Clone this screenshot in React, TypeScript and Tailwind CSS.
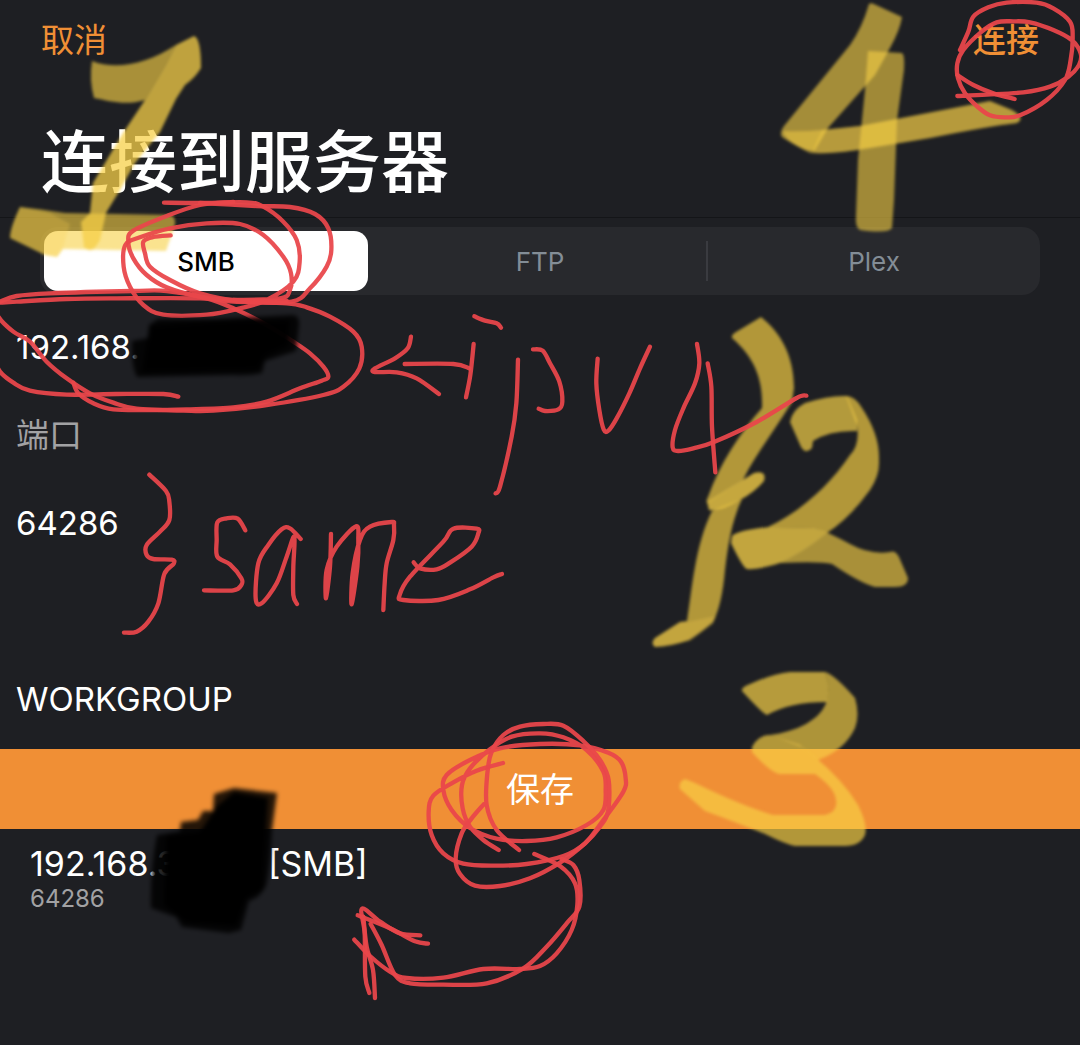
import React, { useState } from "react";

type Point = [number, number];

/* Smooth curve through a list of points (Catmull-Rom to Bezier). */
function smooth(points: Point[]): string {
  let d = `M${points[0][0]} ${points[0][1]}`;
  for (let i = 0; i < points.length - 1; i++) {
    const p0 = points[Math.max(0, i - 1)];
    const p1 = points[i];
    const p2 = points[i + 1];
    const p3 = points[Math.min(points.length - 1, i + 2)];
    d += `C${p1[0] + (p2[0] - p0[0]) / 6} ${p1[1] + (p2[1] - p0[1]) / 6} ${p2[0] - (p3[0] - p1[0]) / 6} ${p2[1] - (p3[1] - p1[1]) / 6} ${p2[0]} ${p2[1]}`;
  }
  return d;
}

/* Pen strokes, grouped by the area they annotate; three drawing units per pixel. */
const penGroups: { x: number; y: number; strokes: Point[][] }[] = [
  {
    x: 760,
    y: 0,
    strokes: [
      [[592, 288], [680, 284], [790, 277], [870, 260], [925, 230], [957, 195], [962, 160], [935, 120], [880, 90], [810, 67], [760, 64], [710, 67], [665, 95], [610, 150], [592, 190], [594, 235], [615, 280], [650, 318], [690, 346], [735, 352], [780, 346], [860, 300], [915, 240], [932, 180], [938, 110], [930, 65], [880, 25], [830, 8], [740, 8], [685, 22], [640, 50], [625, 95], [600, 150]],
      [[592, 225], [640, 255], [700, 280], [764, 297]],
    ],
  },
  {
    x: 0,
    y: 190,
    strokes: [
      [[492, 38], [600, 39], [740, 37], [790, 50], [850, 95], [890, 150], [899, 215], [880, 275], [800, 330], [720, 355], [620, 374], [490, 374], [430, 345], [390, 290], [371, 230], [376, 165], [420, 142], [510, 115], [620, 100], [720, 102], [790, 135], [850, 200], [873, 250], [870, 300], [840, 325], [700, 330]],
      [[600, 39], [770, 48], [870, 51], [945, 72], [985, 115], [994, 180], [980, 230], [930, 295], [875, 335], [720, 333], [600, 310], [510, 270], [450, 230], [435, 190], [430, 155], [460, 141], [512, 136]],
      [[700, 36], [600, 45], [500, 78], [400, 122], [385, 155], [400, 205], [440, 255], [500, 292], [600, 320], [700, 330], [860, 332]],
      [[535, 620], [490, 612], [350, 612], [200, 614], [90, 602], [40, 578], [0, 545], [-20, 500]],
      [[-10, 345], [-5, 380], [40, 425], [90, 455], [140, 515], [200, 565], [270, 610], [340, 638], [410, 656], [550, 662], [640, 662], [800, 645], [970, 615], [1030, 590], [1078, 535], [1085, 470], [1060, 425], [990, 380], [920, 352], [860, 340], [700, 335], [600, 325], [350, 325], [200, 327], [50, 335], [0, 338]],
      [[0, 335], [50, 318], [150, 310], [400, 303], [500, 303], [620, 325], [700, 355], [800, 405], [880, 455], [930, 490], [970, 530], [985, 560], [965, 572], [900, 595], [800, 635], [700, 652], [560, 658], [450, 660], [340, 658], [280, 640], [235, 610], [220, 578]],
    ],
  },
  {
    x: 350,
    y: 300,
    strokes: [
      [[183, 110], [173, 145], [135, 175], [75, 205], [75, 216], [140, 217], [200, 235], [267, 282]],
      [[164, 192], [310, 192], [358, 205]],
      [[371, 132], [361, 225], [348, 292]],
      [[373, 49], [405, 62], [440, 70], [453, 83]],
      [[504, 179], [499, 310], [485, 410], [450, 560], [437, 580]],
      [[549, 148], [578, 152], [600, 190], [628, 245], [637, 305], [625, 328], [585, 333], [566, 326]],
      [[743, 176], [739, 250], [748, 330], [761, 388], [775, 392], [800, 355], [838, 280], [870, 205], [900, 140]],
    ],
  },
  {
    x: 640,
    y: 300,
    strokes: [
      [[171, 132], [178, 190], [165, 250], [130, 325], [105, 390], [98, 442], [115, 453], [160, 445], [220, 427], [350, 366], [470, 294], [499, 287]],
      [[203, 190], [214, 260], [216, 380], [226, 517]],
    ],
  },
  {
    x: 110,
    y: 460,
    strokes: [
      [[118, 44], [168, 93], [178, 125], [178, 180], [150, 215], [110, 255], [110, 285], [130, 297], [185, 299], [191, 311], [163, 342], [145, 430], [115, 485], [80, 515], [42, 518]],
      [[406, 211], [383, 176], [350, 175], [322, 187], [320, 240], [322, 290], [360, 313], [394, 355], [394, 375], [370, 391], [282, 391]],
      [[572, 237], [540, 205], [515, 208], [475, 255], [445, 310], [437, 415], [455, 430], [500, 370], [530, 290], [553, 230], [550, 320], [550, 405], [561, 432]],
      [[663, 222], [660, 320], [648, 415], [650, 330], [680, 260], [738, 199], [745, 240], [742, 320], [725, 433], [728, 340], [750, 240], [780, 200], [845, 186], [852, 195], [850, 240], [830, 310], [824, 370], [820, 450]],
      [[911, 307], [930, 325], [980, 328], [1020, 308], [1085, 260], [1105, 220], [1100, 206], [1030, 206], [1000, 245], [900, 350], [869, 405], [880, 420], [985, 420], [1080, 388], [1150, 352], [1176, 342]],
    ],
  },
  {
    x: 340,
    y: 710,
    strokes: [
      [[489, 159], [410, 182], [340, 217], [280, 257], [266, 305], [275, 375], [310, 430], [370, 461], [460, 467], [560, 462], [670, 438], [735, 400], [790, 330], [850, 245], [857, 205], [843, 155], [805, 128], [720, 106], [600, 102], [480, 115], [390, 150], [320, 195], [310, 240], [335, 300], [390, 354], [470, 386], [560, 393], [650, 382], [740, 345], [790, 300], [797, 240], [790, 185], [740, 120], [670, 82], [600, 70], [515, 80], [450, 118], [390, 175], [366, 225], [368, 295], [390, 350], [430, 390], [476, 420]],
      [[537, 420], [470, 360], [440, 285], [442, 190], [455, 125], [490, 75], [540, 50], [610, 42], [670, 47], [730, 93], [780, 150], [806, 210], [804, 305], [780, 350], [735, 400], [660, 458], [570, 505], [480, 528], [405, 527], [360, 492], [347, 445], [365, 370], [395, 325], [431, 283]],
      [[583, 432], [660, 468], [705, 520], [712, 585], [695, 660], [650, 730], [600, 768], [540, 777], [430, 777], [310, 803], [200, 804], [150, 785], [90, 738], [43, 689]],
      [[665, 447], [700, 465], [718, 510], [718, 590], [680, 640], [620, 710], [550, 775], [440, 820], [310, 824], [210, 820], [165, 795], [125, 705], [92, 642]],
      [[241, 676], [180, 670], [120, 635], [66, 596], [74, 670], [76, 800], [88, 849]],
      [[264, 701], [225, 694], [150, 655], [53, 616]],
      [[70, 620], [80, 710], [99, 780], [105, 864]],
    ],
  },
];

const markerShapes: { d: string; opacity: number }[] = [
  // 1
  { d: "M92 61C115 70 145 65 176 45L165 66L145 100C125 106 110 101 94 98Q89 80 92 61Z", opacity: 0.64 },
  { d: "M176 45L194 36Q201 38 201 68Q195 78 185 85L176 99L160 132L135 163L120 190L106 213L100 240Q92 256 84 247L81 222L90 213L93 183L123 133L145 100L165 66Z", opacity: 0.74 },
  { d: "M20 207Q40 209 65 213L170 215Q176 216 175 225L166 251L63 249L57 257L45 255L10 238Q10 228 20 207Z", opacity: 0.6 },
  { d: "M20 207L50 213L70 224L63 248L57 257L45 255L10 238Q10 228 20 207Z", opacity: 0.25 },
  // 4
  { d: "M869 4Q871 2 876 5L902 17Q900 30 890 48L875 75L828 128L815 150Q808 154 782 137Q779 133 784 126L850 45Q862 28 869 4Z", opacity: 0.62 },
  { d: "M783 131Q802 132 822 130L860 126L990 101L1012 110Q1026 118 1017 123Q990 126 930 138L870 148Q830 155 810 153Q785 141 783 131Z", opacity: 0.5 },
  { d: "M822 130L860 126L990 101L1012 110Q1026 118 1017 123Q990 126 930 138L870 148Q830 155 812 152Z", opacity: 0.4 },
  { d: "M868 51L902 53Q905 55 904 70L897 120L894 200L892 228Q888 234 860 230Q855 228 856 215L858 160L865 90Z", opacity: 0.6 },
  // slash
  { d: "M761 317C780 332 794 355 794 388L792 402C775 430 755 455 743 480L707 503Q706 500 708 497C720 463 740 433 762 408C763 380 755 358 732 338Q731 335 736 332Z", opacity: 0.68 },
  { d: "M707 502L754 473Q767 470 764 481Q755 492 740 500Q720 512 709 510Z", opacity: 0.77 },
  { d: "M712 511L742 499C732 520 728 545 725 570Q722 605 713 622Q700 633 689 640Q670 647 655 647Q650 643 655 638L680 622L687 621C692 590 695 545 712 511Z", opacity: 0.68 },
  { d: "M687 622L716 616L713 624L690 641L655 647Q650 643 655 638L680 622Z", opacity: 0.25 },
  // 2
  { d: "M790 422Q792 410 805 403Q830 395 847 396L857 420L857 431Q830 430 813 441L812 448Q806 455 801 447Z", opacity: 0.69 },
  { d: "M846 396Q855 396 862 408Q880 435 879 460Q880 475 870 490Q850 518 827 533L815 528L768 527C800 512 830 485 850 455Q860 445 857 425Z", opacity: 0.68 },
  { d: "M732 536Q738 530 770 527L815 528Q828 532 850 544Q870 555 890 552Q895 550 899 557L908 578Q908 587 895 587L875 587Q860 583 832 564Q820 561 780 563Q755 570 747 569Q743 568 731 543Z", opacity: 0.64 },
  { d: "M732 536Q738 530 770 527L815 528L827 533Q800 555 775 565Q755 570 747 569Q743 568 731 543Z", opacity: 0.32 },
  // 3
  { d: "M742 691Q741 687 750 684Q775 673 790 672L825 672L829 686L827 702Q790 702 767 715Q763 714 742 691Z", opacity: 0.7 },
  { d: "M825 672Q835 675 855 698Q860 715 855 728Q845 750 818 760L802 747L770 735C795 732 822 720 827 700L829 686Z", opacity: 0.66 },
  { d: "M752 747Q758 735 770 735L800 745Q840 775 858 805Q868 825 865 835Q860 846 845 846L795 846Q785 844 765 834Q730 820 705 811L680 789Q678 782 685 779L695 783Q740 805 773 815L825 815Q838 812 836 800Q835 788 815 774L780 774Q772 774 752 752Z", opacity: 0.68 },
];

function Annotations() {
  return (
    <svg
      aria-hidden="true"
      className="pointer-events-none absolute left-0 top-0"
      width="1080"
      height="1045"
      viewBox="0 0 1080 1045"
      fill="none"
    >
      <defs>
        <filter id="marker-edge" x="-5%" y="-5%" width="110%" height="110%">
          <feGaussianBlur stdDeviation="1.4" />
        </filter>
        <filter id="cover-edge" x="-10%" y="-10%" width="120%" height="120%">
          <feGaussianBlur stdDeviation="2" />
        </filter>
      </defs>
      <g fill="#f7d046" filter="url(#marker-edge)">
        {markerShapes.map((s, i) => (
          <path key={i} d={s.d} fillOpacity={s.opacity} />
        ))}
      </g>
      <g stroke="#e9464a" strokeOpacity="0.94" strokeWidth="13" strokeLinecap="round" strokeLinejoin="round">
        {penGroups.map((g, i) => (
          <g key={i} transform={`translate(${g.x} ${g.y}) scale(0.33333)`}>
            {g.strokes.map((s, j) => (
              <path key={j} d={smooth(s)} />
            ))}
          </g>
        ))}
      </g>
      <g fill="#000" filter="url(#cover-edge)">
        <path d="M132 341L148 338L149 325L158 319L215 319L292 315Q300 315 299 325L296 351L265 361L262 373Q250 376 233 375L137 377Q131 366 132 341Z" fillOpacity="0.85" />
        <path d="M150 326L215 321L290 320L288 346L266 356L258 370L142 372L146 345Z" fillOpacity="0.9" />
        <path d="M214 794L234 788L277 793L272 830Q270 870 266 886Q260 898 249 901L241 930L229 933L182 927L176 917L151 908Q150 870 157 835L180 831L181 822L198 820L203 811L213 811Z" fillOpacity="0.85" />
        <path d="M217 806L234 792L268 798L262 890L246 898L236 926L186 922L164 905L166 836L200 832Z" />
      </g>
    </svg>
  );
}

const tabs = ["SMB", "FTP", "Plex"];

const fieldClass = "block h-[88px] w-full bg-transparent px-4 text-[33px] text-white outline-none";

export default function App() {
  const [tab, setTab] = useState("SMB");

  return (
    <main className="relative min-h-screen overflow-hidden bg-[#1e1f23] font-['Inter','Noto_Sans_CJK_SC',sans-serif] text-white">
      <header className="border-b border-[#141518] px-[41px] pb-[13px]">
        <nav className="flex h-[82px] items-center justify-between text-[33px] text-[#f08f35]">
          <button type="button">取消</button>
          <button type="button" className="font-medium">连接</button>
        </nav>
        <h1 className="pt-[38px] text-[68px] font-medium leading-[84px]">连接到服务器</h1>
      </header>

      <div className="mx-10 mt-[9px] flex h-[68px] gap-2.5 rounded-[18px] bg-[#28292d] p-1 text-[26px]" role="group" aria-label="协议">
        {tabs.map((t) => (
          <button
            key={t}
            type="button"
            aria-pressed={t === tab}
            onClick={() => setTab(t)}
            className={
              t === tab
                ? "flex-1 rounded-[14px] bg-white font-medium text-black"
                : "relative flex-1 text-[#838d96]"
            }
          >
            {t}
            {t === "FTP" && tab !== "FTP" && (
              <span className="absolute -right-1.5 top-[10px] h-10 w-0.5 bg-[#3a3b40]" />
            )}
          </button>
        ))}
      </div>

      <form className="pt-2" onSubmit={(e) => e.preventDefault()}>
        <input aria-label="服务器地址" className={fieldClass} defaultValue="192.168." />
        <label htmlFor="port" className="flex h-[88px] items-center px-4 pt-0.5 text-[33px] text-[#a2a2a4]">
          端口
        </label>
        <input id="port" className={fieldClass} defaultValue="64286" />
        <input aria-label="用户名" className={fieldClass} />
        <input aria-label="工作组" className={fieldClass} defaultValue="WORKGROUP" />
        <button type="submit" className="mt-[6px] flex h-20 w-full items-center justify-center bg-[#f08f35] text-[34px]">
          保存
        </button>
      </form>

      <button type="button" className="block w-full px-[30px] pt-3 text-left">
        <span className="flex h-11 items-center text-[34px]">
          <span className="w-[238px]">192.168.3</span>
          <span>[SMB]</span>
        </span>
        <span className="block text-2xl leading-7 text-[#a2a2a4]">64286</span>
      </button>

      <Annotations />
    </main>
  );
}
